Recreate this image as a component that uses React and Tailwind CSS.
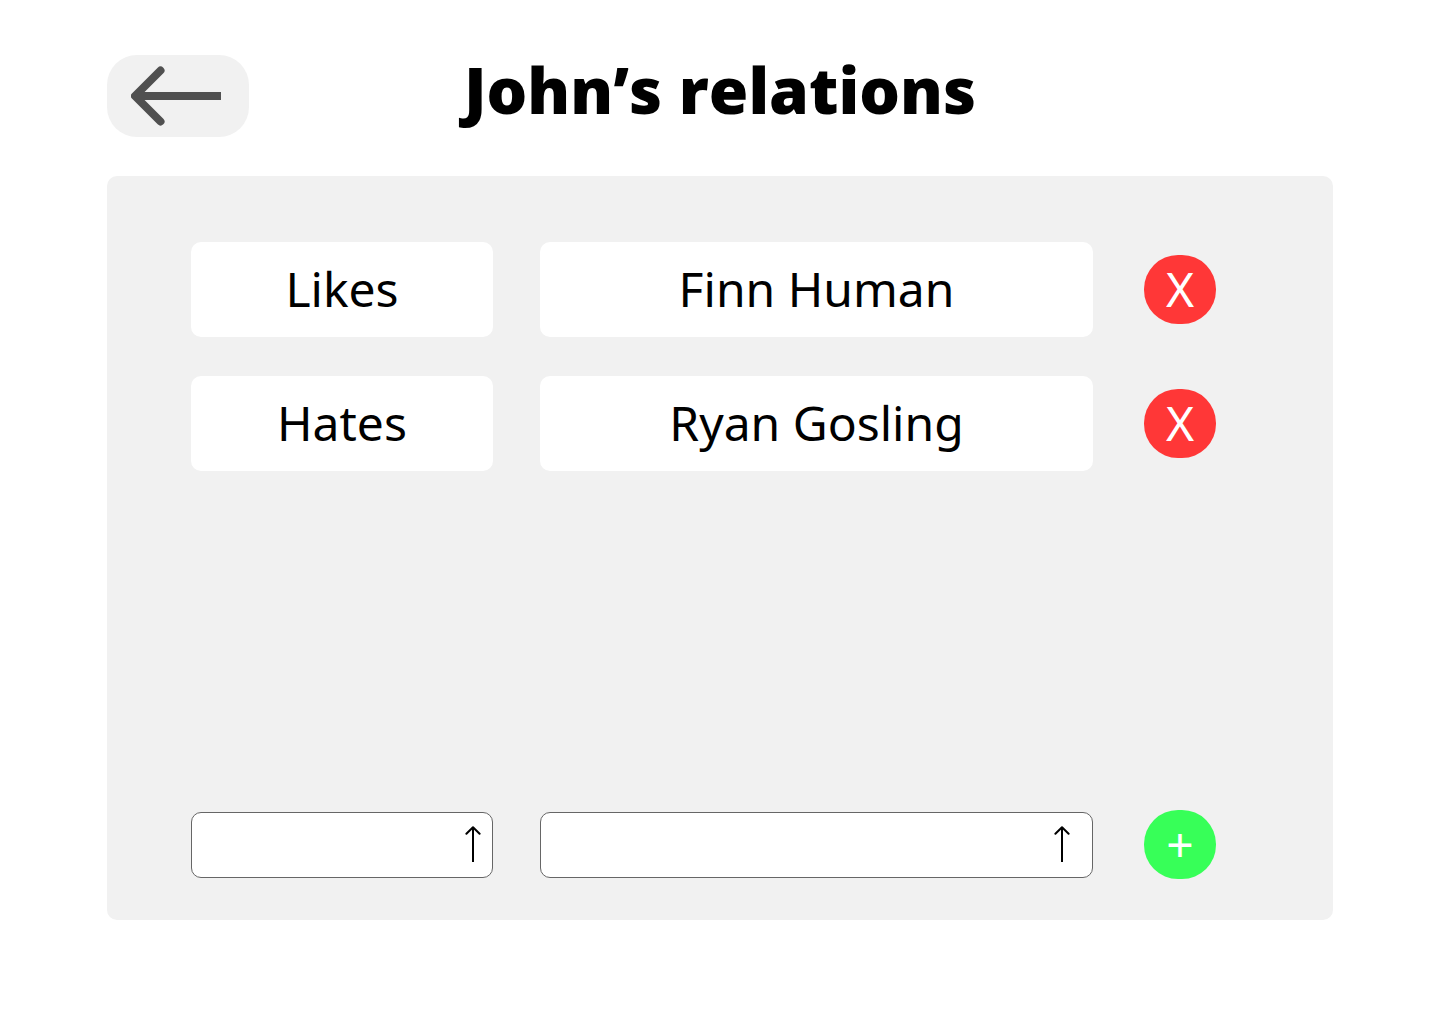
const relations = [
  { kind: "Likes", person: "Finn Human" },
  { kind: "Hates", person: "Ryan Gosling" },
];

function BackArrow() {
  return (
    <svg className="h-[60px] w-[90px]" viewBox="0 0 90 60" fill="none" stroke="#505050" strokeWidth="8" aria-hidden="true">
      <path d="M29.5 4.5 4 30l25.5 25.5" strokeLinecap="round" strokeLinejoin="round" />
      <path d="M4 30h86" />
    </svg>
  );
}

function UpArrow() {
  return (
    <svg className="h-9 w-4" viewBox="0 0 16 36" fill="none" stroke="#000" strokeWidth="2" aria-hidden="true">
      <path d="M1.4 7.8 8 1.2l6.6 6.6" strokeLinecap="round" strokeLinejoin="round" />
      <path d="M8 1.2V36" />
    </svg>
  );
}

function RoundButton({ label, color, children }) {
  return (
    <button
      type="button"
      aria-label={label}
      className={`ml-[51px] flex h-[69px] w-[72px] shrink-0 items-center justify-center rounded-[34px] pb-0.5 text-5xl leading-none text-white ${color}`}
    >
      {children}
    </button>
  );
}

function Picker({ label, options, className, arrowClass }) {
  return (
    <div className={`relative ${className}`}>
      <select
        aria-label={label}
        defaultValue=""
        className="block h-[66px] w-full appearance-none rounded-[10px] border border-[#666666] bg-white px-4 text-3xl"
      >
        <option value=""></option>
        {options.map((option) => (
          <option key={option}>{option}</option>
        ))}
      </select>
      <span className={`pointer-events-none absolute top-3.5 ${arrowClass}`}>
        <UpArrow />
      </span>
    </div>
  );
}

export default function App() {
  return (
    <div className="flex min-h-screen flex-col bg-white px-[107px] pt-[55px] pb-[104px] font-['Noto_Sans',sans-serif] text-black">
      <header className="grid grid-cols-[142px_1fr_142px] items-start">
        <button type="button" aria-label="Back" className="rounded-[30px] bg-[#f1f1f1] py-[11px] pr-7 pl-6">
          <BackArrow />
        </button>
        <h1 className="text-center font-['Open_Sans','Noto_Sans',sans-serif] text-[64px] leading-[70px] font-extrabold whitespace-nowrap">
          John’s relations
        </h1>
      </header>

      <main className="mt-[39px] flex flex-1 flex-col rounded-[10px] bg-[#f1f1f1] pt-[66px] pr-[117px] pb-[41px] pl-[84px]">
        <ul className="flex flex-col gap-[39px]">
          {relations.map(({ kind, person }) => (
            <li key={person} className="flex items-center text-5xl">
              <div className="flex h-[95px] flex-[302] items-center justify-center rounded-[10px] bg-white pb-0.5">{kind}</div>
              <div className="ml-[47px] flex h-[95px] flex-[553] items-center justify-center rounded-[10px] bg-white pb-0.5">{person}</div>
              <RoundButton label={`Remove ${person}`} color="bg-[#ff3737]">X</RoundButton>
            </li>
          ))}
        </ul>

        <form className="mt-auto flex items-center">
          <Picker label="Relation" options={relations.map((r) => r.kind)} className="flex-[302]" arrowClass="right-3" />
          <Picker label="Person" options={relations.map((r) => r.person)} className="ml-[47px] flex-[553]" arrowClass="right-[23px]" />
          <RoundButton label="Add relation" color="bg-[#37ff58]">+</RoundButton>
        </form>
      </main>
    </div>
  );
}
